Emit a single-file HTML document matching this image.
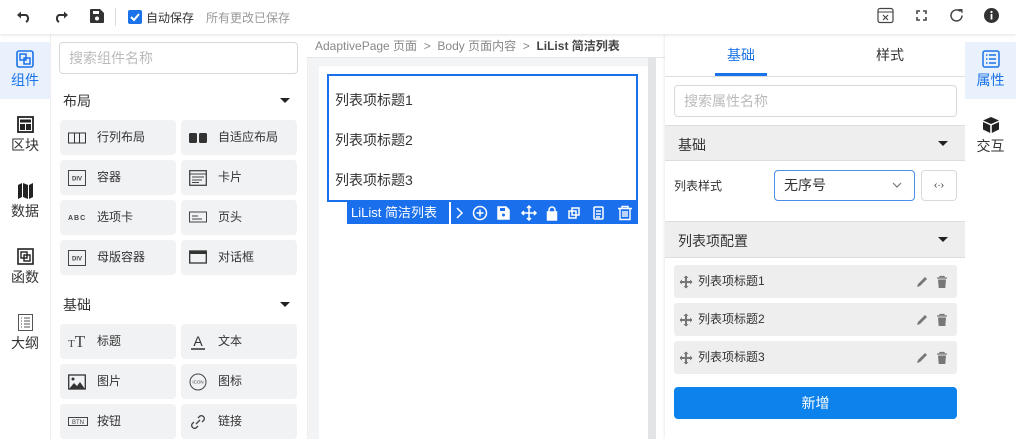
<!DOCTYPE html>
<html><head><meta charset="utf-8"><style>
*{box-sizing:border-box;margin:0;padding:0}
body{width:1016px;height:439px;overflow:hidden;font-family:"Liberation Sans","Noto Sans CJK SC",sans-serif;background:#fff;color:#333;position:relative;font-size:13px}
.abs{position:absolute}
.top{left:0;top:0;width:1016px;height:34px;background:#fff;box-shadow:0 1px 3px rgba(0,0,0,.12);z-index:5}
.rail{top:34px;width:50px;height:405px;background:#fff}
.ri{position:absolute;left:0;width:50px;height:57px;text-align:center;font-size:14px;color:#333}
.ri svg{display:block;margin:8px auto 2px}
.ri.act{background:#e9f1fd;color:#1a73e8}
.item{position:absolute;width:116px;height:35px;background:#f1f2f4;border-radius:4px;font-size:12px;color:#333;line-height:35px;padding-left:37px}
.item i{position:absolute;left:8px;top:10px;width:20px;height:16px;font-style:normal;line-height:0;display:block}
.item i svg{display:block}
.sec{font-size:14px;color:#333}
.tri{position:absolute;width:0;height:0;border-left:5px solid transparent;border-right:5px solid transparent;border-top:5px solid #222}
.li{position:absolute;left:674px;width:283px;height:33px;background:#eeeeee;border-radius:3px;font-size:12px;line-height:33px;padding-left:24px;color:#333}
</style></head><body>
<div class="abs top">
 <svg class="abs" style="left:16px;top:9px" width="16" height="16" viewBox="0 0 16 16"><path d="M4 6h6a4 4 0 0 1 0 7" stroke="#333" stroke-width="2" fill="none"/><path d="M1 6l4-3.5v7z" fill="#333"/></svg>
 <svg class="abs" style="left:53px;top:9px" width="16" height="16" viewBox="0 0 16 16"><path d="M12 6H6a4 4 0 0 0 0 7" stroke="#333" stroke-width="2" fill="none"/><path d="M15 6l-4-3.5v7z" fill="#333"/></svg>
 <svg class="abs" style="left:90px;top:9px" width="14" height="14" viewBox="0 0 14 14"><path d="M0 1a1 1 0 0 1 1-1h9l4 4v9a1 1 0 0 1-1 1H1a1 1 0 0 1-1-1z" fill="#333"/><rect x="3" y="2" width="6" height="3" fill="#fff"/><circle cx="7" cy="9.5" r="2" fill="#fff"/></svg>
 <div class="abs" style="left:115px;top:8px;width:1px;height:18px;background:#ddd"></div>
 <div class="abs" style="left:128px;top:10px;width:14px;height:14px;background:#1a73e8;border-radius:2px"><svg width="14" height="14"><path d="M3 7l3 3 5-6" stroke="#fff" stroke-width="2" fill="none"/></svg></div>
 <div class="abs" style="left:146px;top:9px;font-size:12px;color:#333">自动保存</div>
 <div class="abs" style="left:206px;top:9px;font-size:12px;color:#999">所有更改已保存</div>
 <svg class="abs" style="left:877px;top:7px" width="17" height="17" viewBox="0 0 17 17"><rect x="1" y="1.5" width="15" height="14" rx="2" fill="none" stroke="#444" stroke-width="1.2"/><path d="M1 5h15" stroke="#444"/><path d="M6 8l5 5M11 8l-5 5" stroke="#444" stroke-width="1.2"/></svg>
 <svg class="abs" style="left:916px;top:10px" width="11" height="11" viewBox="0 0 11 11"><path d="M1 4V1h3M7 1h3v3M10 7v3H7M4 10H1V7" stroke="#444" stroke-width="1.6" fill="none"/></svg>
 <svg class="abs" style="left:948px;top:7px" width="17" height="17" viewBox="0 0 17 17"><path d="M14 8.5a5.5 5.5 0 1 1-2-4.3" stroke="#444" stroke-width="1.5" fill="none"/><path d="M10 2h4.5v4.5z" fill="#444"/></svg>
 <svg class="abs" style="left:984px;top:8px" width="15" height="15" viewBox="0 0 15 15"><circle cx="7.5" cy="7.5" r="7.5" fill="#333"/><rect x="6.6" y="6" width="1.8" height="5.5" fill="#fff"/><circle cx="7.5" cy="4" r="1.1" fill="#fff"/></svg>
</div>

<div class="abs rail" style="left:0">
 <div class="ri act" style="top:8px"><svg width="18" height="18" viewBox="0 0 18 18"><rect x="1" y="1" width="16" height="16" rx="2" fill="none" stroke="#1a73e8" stroke-width="1.6"/><rect x="4" y="4" width="6" height="6" fill="none" stroke="#1a73e8" stroke-width="1.5"/><rect x="8" y="8" width="6" height="6" fill="none" stroke="#1a73e8" stroke-width="1.5"/></svg>组件</div>
 <div class="ri" style="top:74px"><svg width="17" height="17" viewBox="0 0 17 17"><rect x="1" y="1" width="15" height="15" fill="none" stroke="#222" stroke-width="1.8"/><rect x="3" y="3.5" width="11" height="3" fill="#222"/><rect x="3" y="8" width="5" height="6" fill="#222"/><rect x="9" y="8" width="5" height="6" fill="#222"/></svg>区块</div>
 <div class="ri" style="top:140px"><svg width="17" height="17" viewBox="0 0 17 17"><path d="M1 3l4-2v14l-4 2zM6 1l5 2v14l-5-2zM12 3l4-2v14l-4 2z" fill="#222"/></svg>数据</div>
 <div class="ri" style="top:206px"><svg width="17" height="17" viewBox="0 0 17 17"><rect x="1" y="1" width="15" height="15" fill="none" stroke="#222" stroke-width="1.6"/><rect x="4" y="4" width="6" height="6" fill="none" stroke="#222" stroke-width="1.4"/><rect x="7" y="7" width="6" height="6" fill="none" stroke="#222" stroke-width="1.4"/></svg>函数</div>
 <div class="ri" style="top:272px"><svg width="15" height="17" viewBox="0 0 15 17"><rect x="0.5" y="0.5" width="14" height="16" fill="none" stroke="#555"/><path d="M3 4h1M6 4h6M3 7h1M6 7h6M3 10h1M6 10h6M3 13h1M6 13h6" stroke="#555"/></svg>大纲</div>
</div>
<div class="abs" style="left:50px;top:34px;width:1px;height:405px;background:#eee"></div>

<div class="abs" style="left:59px;top:42px;width:239px;height:32px;border:1px solid #d9d9d9;border-radius:4px;font-size:14px;color:#bbb;line-height:30px;padding-left:9px">搜索组件名称</div>
<div class="abs sec" style="left:63px;top:91px">布局</div><div class="tri" style="left:280px;top:98px"></div>
<div class="item" style="left:60px;top:120px"><i style="top:12px"><svg width="18" height="12"><rect x="0.5" y="1" width="17" height="10" fill="none" stroke="#333"/><path d="M6.5 1v10M11.5 1v10" stroke="#333"/></svg></i>行列布局</div>
<div class="item" style="left:181px;top:120px"><i style="top:12px"><svg width="18" height="12"><rect x="0" y="1" width="8" height="10" rx="1.5" fill="#333"/><rect x="10" y="1" width="8" height="10" rx="1.5" fill="#333"/></svg></i>自适应布局</div>
<div class="item" style="left:60px;top:160px"><i><svg width="18" height="16"><rect x="0.5" y="0.5" width="17" height="15" fill="none" stroke="#444"/><text x="9" y="10.5" font-size="6" text-anchor="middle" fill="#444" font-family="Liberation Sans" font-weight="bold">DIV</text></svg></i>容器</div>
<div class="item" style="left:181px;top:160px"><i><svg width="18" height="16"><rect x="0.7" y="0.7" width="16.6" height="14.6" fill="none" stroke="#444" stroke-width="1.3"/><path d="M1 4h16M3 7h12M3 10h10M3 12.5h7" stroke="#444"/></svg></i>卡片</div>
<div class="item" style="left:60px;top:200px"><i><svg width="20" height="14"><text x="0" y="10" font-size="7" fill="#444" font-family="Liberation Sans" font-weight="bold" letter-spacing="1">ABC</text></svg></i>选项卡</div>
<div class="item" style="left:181px;top:200px"><i><svg width="18" height="14"><rect x="0.5" y="2" width="17" height="10" fill="none" stroke="#444"/><path d="M3 6h6M3 9h10" stroke="#444"/></svg></i>页头</div>
<div class="item" style="left:60px;top:240px"><i><svg width="18" height="16"><rect x="0.5" y="0.5" width="17" height="15" fill="none" stroke="#444"/><text x="9" y="10.5" font-size="6" text-anchor="middle" fill="#444" font-family="Liberation Sans" font-weight="bold">DIV</text></svg></i>母版容器</div>
<div class="item" style="left:181px;top:240px"><i><svg width="18" height="14"><rect x="0.7" y="1" width="16.6" height="12" fill="none" stroke="#333" stroke-width="1.3"/><rect x="1" y="1" width="16" height="3" fill="#333"/></svg></i>对话框</div>
<div class="abs sec" style="left:63px;top:295px">基础</div><div class="tri" style="left:280px;top:302px"></div>
<div class="item" style="left:60px;top:324px"><i style="line-height:16px"><span style="font-family:'Liberation Serif';font-size:17px;color:#444;display:block"><small style="font-size:11px">T</small>T</span></i>标题</div>
<div class="item" style="left:181px;top:324px"><i><svg width="18" height="16"><text x="9" y="12" font-size="14" text-anchor="middle" fill="#333" font-family="Liberation Sans">A</text><path d="M2 15h14" stroke="#333" stroke-width="1.5"/></svg></i>文本</div>
<div class="item" style="left:60px;top:364px"><i><svg width="18" height="16"><rect x="0.7" y="1" width="16.6" height="14" fill="none" stroke="#333" stroke-width="1.3"/><path d="M1 15l5-6 3 3 3-4 5 7z" fill="#333"/><circle cx="5" cy="5" r="1.5" fill="#333"/></svg></i>图片</div>
<div class="item" style="left:181px;top:364px"><i style="top:9px"><svg width="18" height="18"><circle cx="9" cy="9" r="8" fill="none" stroke="#444"/><text x="9" y="10.5" font-size="4.5" text-anchor="middle" fill="#444" font-family="Liberation Sans">ICON</text></svg></i>图标</div>
<div class="item" style="left:60px;top:404px"><i style="top:12px"><svg width="20" height="12"><rect x="0.5" y="1.5" width="19" height="8" fill="none" stroke="#444"/><text x="10" y="8" font-size="6" text-anchor="middle" fill="#444" font-family="Liberation Sans">BTN</text></svg></i>按钮</div>
<div class="item" style="left:181px;top:404px"><i style="top:9px"><svg width="18" height="18"><path d="M7 11l4-4M5 9l-2 2a3 3 0 0 0 4 4l2-2M13 9l2-2a3 3 0 0 0-4-4l-2 2" stroke="#444" stroke-width="1.3" fill="none"/></svg></i>链接</div>

<div class="abs" style="left:307px;top:34px;width:358px;height:405px;background:#f3f4f6;border-left:1px solid #eee"></div>
<div class="abs" style="left:307px;top:34px;width:358px;height:24px;background:#fff;border-bottom:1px solid #e5e5e5;font-size:12px;color:#888;line-height:24px;padding-left:8px;white-space:nowrap">AdaptivePage 页面 &nbsp;&gt;&nbsp; Body 页面内容 &nbsp;&gt;&nbsp; <b style="color:#444">LiList 简洁列表</b></div>
<div class="abs" style="left:319px;top:66px;width:329px;height:373px;background:#fff"></div>
<div class="abs" style="left:648px;top:58px;width:17px;height:381px;background:#e3e4e6"></div>
<div class="abs" style="left:656px;top:58px;width:9px;height:381px;background:#fff"></div>
<div class="abs" style="left:327px;top:74px;width:311px;height:128px;border:2px solid #1a6fec"></div>
<div class="abs" style="left:335px;top:90px;font-size:14px;color:#333">列表项标题1</div>
<div class="abs" style="left:335px;top:130px;font-size:14px;color:#333">列表项标题2</div>
<div class="abs" style="left:335px;top:170px;font-size:14px;color:#333">列表项标题3</div>
<div class="abs" style="left:347px;top:202px;width:291px;height:22px;background:#1a6fec;color:#fff;font-size:13px;line-height:22px">
 <span style="position:absolute;left:4px">LiList 简洁列表</span>
 <div style="position:absolute;left:102px;top:0;width:2px;height:22px;background:#fff"></div>
 <svg style="position:absolute;left:108px;top:3px" width="160" height="16" viewBox="0 0 160 16" fill="none" stroke="#fff" stroke-width="1.5">
  <path d="M2 3l5 5-5 5"/>
  <circle cx="25" cy="8" r="6.5"/><path d="M25 4.5v7M21.5 8h7"/>
  <path d="M43 2h8l3 3v9H43z" fill="#fff"/><rect x="45" y="3" width="5" height="3" fill="#1a6fec" stroke="none"/><circle cx="48.5" cy="10" r="1.5" fill="#1a6fec" stroke="none"/>
  <path d="M74 1v14M67 8h14M72 3l2-2 2 2M72 13l2 2 2-2M69 6l-2 2 2 2M79 6l2 2-2 2"/>
  <path d="M94 7V5a3 3 0 0 1 6 0v2"/><rect x="92.5" y="7" width="9" height="8" fill="#fff"/>
  <rect x="114" y="6" width="7" height="7"/><rect x="117" y="3" width="7" height="7"/>
  <rect x="139" y="2" width="9" height="12" rx="1"/><path d="M141 6h5M141 9h5M141 12h4"/>
 </svg>
 <svg style="position:absolute;left:270px;top:3px" width="16" height="16" viewBox="0 0 16 16" fill="none" stroke="#fff" stroke-width="1.4"><path d="M1 3.5h14M5 3.5V1.5h6v2M3 3.5v11h10v-11M6 6v6M8 6v6M10 6v6"/></svg>
</div>

<div class="abs" style="left:665px;top:34px;width:300px;height:405px;background:#fff;box-shadow:-1px 0 2px rgba(0,0,0,.08)"></div>
<div class="abs" style="left:727px;top:45px;font-size:14px;color:#1a73e8">基础</div>
<div class="abs" style="left:876px;top:45px;font-size:14px;color:#333">样式</div>
<div class="abs" style="left:715px;top:73px;width:52px;height:3px;background:#1a73e8"></div>
<div class="abs" style="left:665px;top:76px;width:300px;height:1px;background:#ddd"></div>
<div class="abs" style="left:674px;top:85px;width:283px;height:32px;border:1px solid #d9d9d9;border-radius:4px;font-size:14px;color:#bbb;line-height:30px;padding-left:9px">搜索属性名称</div>
<div class="abs" style="left:665px;top:125px;width:300px;height:36px;background:#eee;border-top:1px solid #ddd;border-bottom:1px solid #ddd"></div>
<div class="abs sec" style="left:678px;top:135px">基础</div><div class="tri" style="left:938px;top:141px"></div>
<div class="abs" style="left:674px;top:177px;font-size:12px;color:#333">列表样式</div>
<div class="abs" style="left:774px;top:170px;width:141px;height:31px;border:1px solid #4a8fe8;border-radius:4px;font-size:14px;color:#333;line-height:29px;padding-left:9px">无序号<svg style="position:absolute;right:12px;top:11px" width="10" height="7"><path d="M1 1l4 4 4-4" stroke="#777" fill="none" stroke-width="1.2"/></svg></div>
<div class="abs" style="left:921px;top:170px;width:36px;height:31px;border:1px solid #d9d9d9;border-radius:4px;text-align:center;font-size:10px;line-height:29px;color:#333">‹·›</div>
<div class="abs" style="left:665px;top:221px;width:300px;height:37px;background:#eee;border-top:1px solid #ddd;border-bottom:1px solid #ddd"></div>
<div class="abs sec" style="left:678px;top:231px">列表项配置</div><div class="tri" style="left:938px;top:237px"></div>
<div class="li" style="top:265px">列表项标题1</div>
<div class="li" style="top:303px">列表项标题2</div>
<div class="li" style="top:341px">列表项标题3</div>
<svg class="abs" style="left:680px;top:274px" width="280" height="100" viewBox="0 0 280 100">
 <g id="r" fill="#777" stroke="#777">
  <path d="M6 2v12M0 8h12" stroke-width="2"/><path d="M3.5 4L6 1.5 8.5 4M3.5 12L6 14.5 8.5 12M2 5.5L-.5 8 2 10.5M10 5.5l2.5 2.5-2.5 2.5" fill="#777" stroke="none"/>
  <path d="M237 13l1-3 7-7 2 2-7 7z" stroke="none"/>
  <path d="M257 4h10M260 4V2.5h4V4" stroke-width="1.2" fill="none"/><path d="M258 5.5h8l-.7 8.5h-6.6z" stroke="none"/>
 </g>
 <use href="#r" y="38"/><use href="#r" y="76"/>
</svg>
<div class="abs" style="left:674px;top:387px;width:283px;height:32px;background:#0b82ec;border-radius:4px;color:#fff;font-size:14px;text-align:center;line-height:32px">新增</div>

<div class="abs rail" style="left:965px;width:51px">
 <div class="ri act" style="top:8px;width:51px"><svg width="18" height="18" viewBox="0 0 18 18"><rect x="1" y="1" width="16" height="16" rx="2" fill="none" stroke="#1a73e8" stroke-width="1.5"/><path d="M4 5h1.5M7 5h7M4 9h1.5M7 9h7M4 13h1.5M7 13h7" stroke="#1a73e8" stroke-width="1.5"/></svg>属性</div>
 <div class="ri" style="top:74px;width:51px"><svg width="18" height="18" viewBox="0 0 18 18"><path d="M9 1l8 3.5-8 3.5-8-3.5z" fill="#222"/><path d="M1 6l7.2 3.2V17L1 13.5zM17 6l-7.2 3.2V17l7.2-3.5z" fill="#222"/></svg>交互</div>
</div>
</body></html>
